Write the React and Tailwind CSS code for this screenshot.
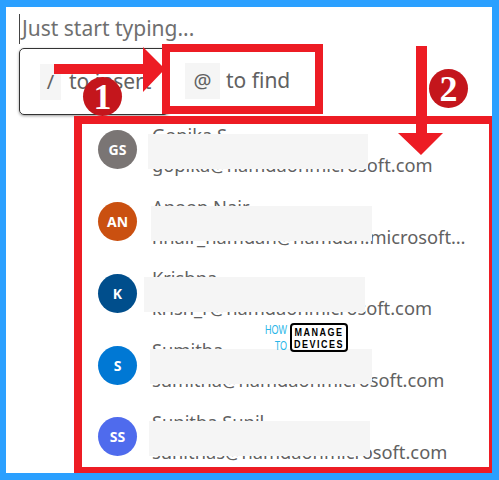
const PEOPLE = [
  { initials: 'GS', bg: 'bg-[#7a7574]', name: 'Gopika S', email: 'gopika@hamdaonmicrosoft.com', mask: 'left-[-4px] w-[220px]' },
  { initials: 'AN', bg: 'bg-[#ca5010]', name: 'Anoop Nair', email: 'nnair_hamdan@hamdan.microsoft.com', mask: 'left-[-1px] w-[221px]' },
  { initials: 'K', bg: 'bg-[#004e8c]', name: 'Krishna', email: 'krish_r@hamdaonmicrosoft.com', mask: 'left-[-8px] w-[221px]' },
  { initials: 'S', bg: 'bg-[#0078d4]', name: 'Sumitha', email: 'sumitha@hamdaonmicrosoft.com', mask: 'left-[-2px] w-[222px]' },
  { initials: 'SS', bg: 'bg-[#4f6bed]', name: 'Sunitha Sunil', email: 'sunithas@hamdaonmicrosoft.com', mask: 'left-[-3px] w-[221px]' },
];

function PersonRow({ person }) {
  return (
    <div className="flex items-center h-[71.75px] pl-[16px]">
      <div className={`w-[39px] h-[39px] shrink-0 rounded-full flex items-center justify-center text-white text-[14px] font-bold ${person.bg}`}>
        {person.initials}
      </div>
      <div className="relative ml-[15px] w-[316px] flex flex-col text-[18.3px] leading-[30px] text-[#616161]">
        <span className="truncate">{person.name}</span>
        <span className="truncate">{person.email}</span>
        <div className={`absolute top-[14px] h-[35px] bg-[#f5f5f5] ${person.mask}`} />
      </div>
    </div>
  );
}

function Badge({ n, className }) {
  return (
    <div className={`absolute w-[39px] h-[39px] rounded-full bg-[#c4161c] text-white flex items-center justify-center text-[36px] font-bold font-['Liberation_Serif',serif] ${className}`}>
      {n}
    </div>
  );
}

export default function App() {
  return (
    <div className="relative w-[499px] h-[480px] overflow-hidden bg-[#2ba0ff] pt-[7px] pl-[6px] pr-[7px] pb-[7px] font-['Noto_Sans',sans-serif]">
      <div className="h-full bg-white flex flex-col">
        <div className="h-[38px] pl-[13px] pt-[7px] flex items-start">
          <span className="w-px h-[30px] bg-[#444] mr-[2px]" />
          <span className="text-[21px] leading-[28px] text-[#6f6f6f]">Just start typing...</span>
        </div>

        {/* hint card + find box */}
        <div className="flex items-start h-[71px] pl-[13px]">
          <div className="w-[150px] h-[67px] mt-[3px] shrink-0 rounded-[5px] border border-[#333] shadow-[0_1px_3px_rgba(0,0,0,0.4)] flex items-center pl-[20px]">
            <span className="w-[21px] h-[36px] bg-[#f5f5f5] flex items-center justify-center text-[20px] text-[#616161]">/</span>
            <span className="ml-[8px] text-[21px] text-[#616161] whitespace-nowrap">to insert</span>
          </div>
          <div className="ml-[-7px] mt-[-1px] w-[161px] h-[70px] shrink-0 border-[8px] border-[#ed1c24] bg-white flex items-center pl-[15px] pt-[4px]">
            <span className="w-[35px] h-[36px] bg-[#f5f5f5] flex items-center justify-center text-[20px] text-[#616161]">@</span>
            <span className="ml-[6px] text-[21px] text-[#616161] whitespace-nowrap">to find</span>
          </div>
        </div>

        {/* people results */}
        <div className="ml-[68px] flex-1 border-t-[8px] border-l-[8px] border-r-[3px] border-b-[6px] border-[#ed1c24] overflow-hidden">
          <div className="-mt-[10px]">
            {PEOPLE.map(person => (
              <PersonRow key={person.initials} person={person} />
            ))}
          </div>
        </div>
      </div>

      {/* annotations */}
      <svg className="absolute left-0 top-0" width="499" height="480" viewBox="0 0 499 480">
        <path d="M54 64 H143 V47 L165 69 L143 92 V74 H54 Z" fill="#ed1c24" />
        <path d="M416 46 H427 V133 H443 L421 155 L398 133 H416 Z" fill="#ed1c24" />
      </svg>
      <Badge n="1" className="left-[83px] top-[77px]" />
      <Badge n="2" className="left-[429px] top-[69px]" />

      {/* watermark */}
      <div className="absolute left-[267px] top-[323px] flex items-center gap-[3px] font-['Liberation_Sans',sans-serif]">
        <div className="w-[20px] flex flex-col items-end text-[9px] leading-[12px] text-[#29b6e8] scale-y-[1.35]">
          <span>HOW</span>
          <span>TO</span>
        </div>
        <div className="w-[58px] h-[29px] border-2 border-black rounded-[4px] flex items-center justify-center">
          <div className="flex flex-col items-center text-[9px] leading-[10px] font-bold text-black tracking-[1.5px] scale-y-[1.25]">
            <span>MANAGE</span>
            <span>DEVICES</span>
          </div>
        </div>
      </div>
    </div>
  );
}
